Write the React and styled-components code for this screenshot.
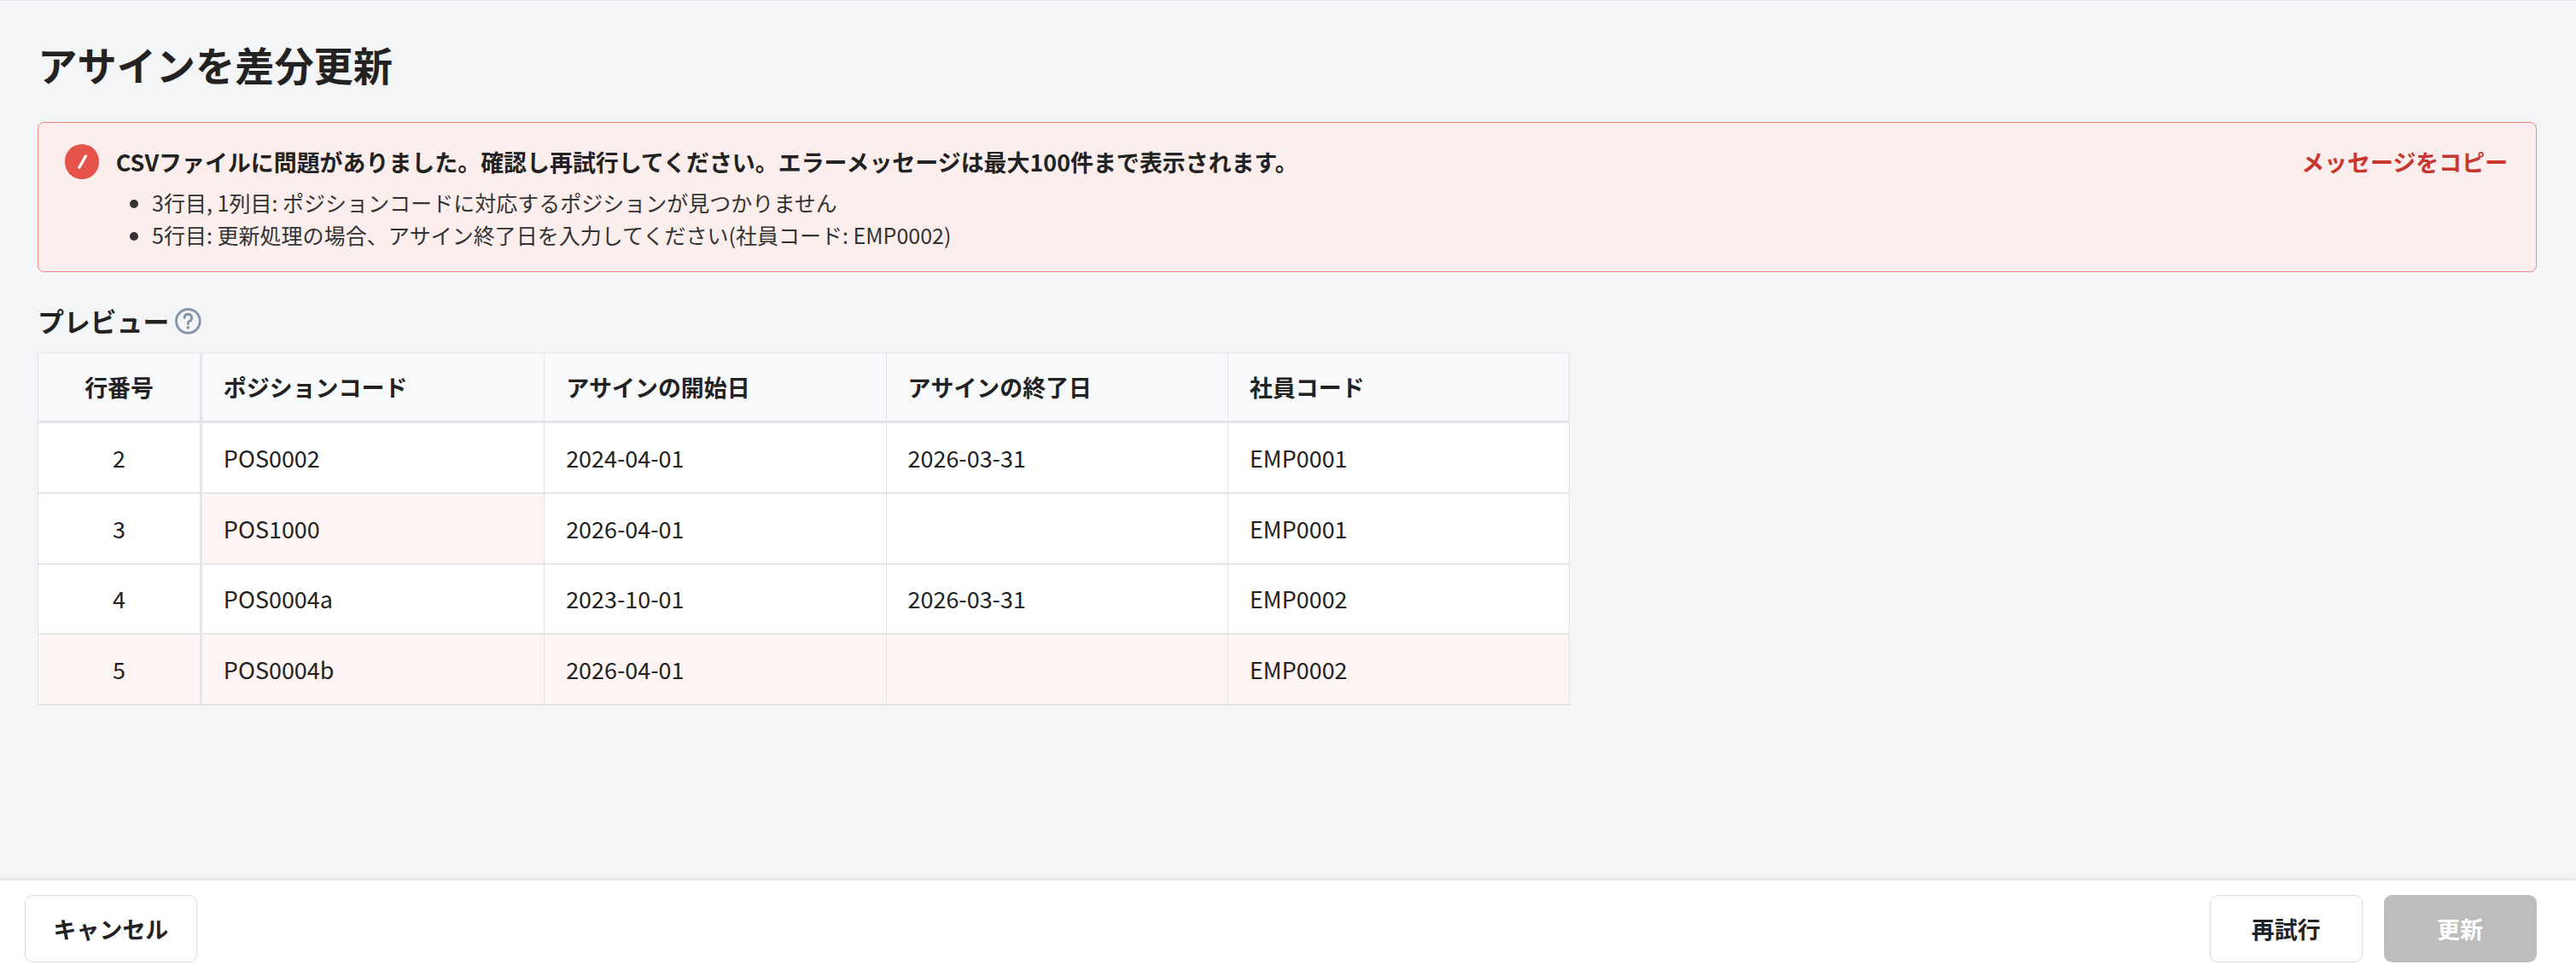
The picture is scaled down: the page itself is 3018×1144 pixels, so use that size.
import React from "react";
import styled, { createGlobalStyle } from "styled-components";

const S = 1.925;
const p = (v) => `${(v * S).toFixed(2)}px`;

const Global = createGlobalStyle`
  html, body { margin: 0; padding: 0; }
  body { background: #f4f5f7; font-family: "Noto Sans CJK JP", "Noto Sans", sans-serif; color: #222; }
`;

const Page = styled.div`
  height: 1144px;
  display: flex;
  flex-direction: column;
  border-top: ${p(1)} solid #ebecef;
  box-sizing: border-box;
`;
const Main = styled.main`
  flex: 1;
  padding: ${p(20)} ${p(24)} 0 ${p(23)};
`;
const Title = styled.h1`
  margin: 0;
  font-size: ${p(24)};
  font-weight: 700;
  line-height: ${p(36)};
`;
const Alert = styled.div`
  margin-top: ${p(18)};
  background: #fbeeed;
  border: ${p(1)} solid #ee8580;
  border-radius: ${p(4)};
  padding: ${p(13)} ${p(17)} ${p(12)} ${p(16)};
  display: flex;
  gap: ${p(10)};
`;
const AlertIcon = styled.div`
  width: ${p(21)};
  height: ${p(21)};
  border-radius: 50%;
  background: #e5534b;
  flex-shrink: 0;
  display: flex;
  align-items: center;
  justify-content: center;
`;
const AlertBody = styled.div` flex: 1; `;
const AlertTitle = styled.div`
  font-weight: 700;
  font-size: ${p(14)};
  line-height: ${p(22)};
`;
const List = styled.ul`
  margin: ${p(3)} 0 0;
  padding-left: ${p(22)};
  font-size: ${p(13)};
  line-height: ${p(20)};
  color: #333;
`;
const CopyLink = styled.button`
  border: none;
  background: none;
  padding: 0;
  align-self: flex-start;
  color: #c8372d;
  font: inherit;
  font-weight: 700;
  font-size: ${p(14)};
  line-height: ${p(22)};
  cursor: pointer;
`;
const SectionTitle = styled.div`
  margin-top: ${p(19)};
  display: flex;
  align-items: center;
  gap: ${p(3)};
  font-weight: 700;
  font-size: ${p(16)};
  line-height: ${p(22)};
`;
const Table = styled.table`
  margin-top: ${p(8)};
  border-collapse: collapse;
  background: #fff;
  border: ${p(1)} solid #e3e5e8;
  font-size: ${p(14)};
`;
const Th = styled.th`
  background: #f8f9fb;
  font-weight: 700;
  text-align: ${(x) => (x.$center ? "center" : "left")};
  width: ${(x) => p(x.$w)};
  height: ${p(42)};
  padding: 0 ${p(13)};
  border-right: ${(x) => (x.$first ? p(2) : p(1))} solid #e3e5e8;
  border-bottom: ${p(2)} solid #e3e5e8;
  box-sizing: border-box;
`;
const Td = styled.td`
  height: ${p(42)};
  padding: 0 ${p(13)};
  text-align: ${(x) => (x.$center ? "center" : "left")};
  background: ${(x) => (x.$err ? "#fdf4f3" : "transparent")};
  border-right: ${(x) => (x.$first ? p(2) : p(1))} solid #e3e5e8;
  border-bottom: ${p(1.5)} solid #e3e5e8;
  color: #222;
`;
const Tr = styled.tr` background: ${(x) => (x.$err ? "#fdf4f3" : "#fff")}; `;
const Footer = styled.footer`
  background: #fff;
  box-shadow: 0 -${p(1)} ${p(2)} rgba(0,0,0,0.08);
  height: ${p(58)};
  padding: 0 ${p(24)} 0 ${p(15)};
  display: flex;
  align-items: center;
  gap: ${p(13)};
`;
const Btn = styled.button`
  height: ${p(41)};
  padding: 0 ${p(17)};
  border-radius: ${p(5)};
  font: inherit;
  font-weight: 700;
  font-size: ${p(14)};
  border: ${(x) => (x.$disabled ? "none" : `${p(1)} solid #d8dde3`)};
  background: ${(x) => (x.$disabled ? "#bdbdbd" : "#fff")};
  color: ${(x) => (x.$disabled ? "#fff" : "#222")};
  min-width: ${(x) => (x.$w ? p(x.$w) : "auto")};
`;
const Spacer = styled.div` flex: 1; `;

const rows = [
  ["2", "POS0002", "2024-04-01", "2026-03-31", "EMP0001", false, false],
  ["3", "POS1000", "2026-04-01", "", "EMP0001", false, true],
  ["4", "POS0004a", "2023-10-01", "2026-03-31", "EMP0002", false, false],
  ["5", "POS0004b", "2026-04-01", "", "EMP0002", true, false],
];

export default function App() {
  return (
    <>
      <Global />
      <Page>
        <Main>
          <Title>アサインを差分更新</Title>
          <Alert>
            <AlertIcon>
              <svg width={p(10)} height={p(10)} viewBox="0 0 10 10">
                <line x1="3" y1="8.5" x2="7" y2="1.5" stroke="#fff" strokeWidth="1.6" strokeLinecap="round" />
              </svg>
            </AlertIcon>
            <AlertBody>
              <AlertTitle>CSVファイルに問題がありました。確認し再試行してください。エラーメッセージは最大100件まで表示されます。</AlertTitle>
              <List>
                <li>3行目, 1列目: ポジションコードに対応するポジションが見つかりません</li>
                <li>5行目: 更新処理の場合、アサイン終了日を入力してください(社員コード: EMP0002)</li>
              </List>
            </AlertBody>
            <CopyLink>メッセージをコピー</CopyLink>
          </Alert>
          <SectionTitle>
            プレビュー
            <svg width={p(17)} height={p(17)} viewBox="0 0 20 20">
              <circle cx="10" cy="10" r="8.5" fill="none" stroke="#8596ab" strokeWidth="1.8" />
              <path d="M7.4 7.6a2.6 2.6 0 1 1 3.6 2.4c-.7.3-1 .8-1 1.5v.6" fill="none" stroke="#8596ab" strokeWidth="1.8" strokeLinecap="round" />
              <circle cx="10" cy="14.6" r="1.1" fill="#8596ab" />
            </svg>
          </SectionTitle>
          <Table>
            <thead>
              <tr>
                <Th $w={99} $center $first>行番号</Th>
                <Th $w={209}>ポジションコード</Th>
                <Th $w={208}>アサインの開始日</Th>
                <Th $w={208}>アサインの終了日</Th>
                <Th $w={208}>社員コード</Th>
              </tr>
            </thead>
            <tbody>
              {rows.map((r) => (
                <Tr key={r[0]} $err={r[5]}>
                  <Td $center $first>{r[0]}</Td>
                  <Td $err={r[6]}>{r[1]}</Td>
                  <Td>{r[2]}</Td>
                  <Td>{r[3]}</Td>
                  <Td>{r[4]}</Td>
                </Tr>
              ))}
            </tbody>
          </Table>
        </Main>
        <Footer>
          <Btn>キャンセル</Btn>
          <Spacer />
          <Btn $w={93}>再試行</Btn>
          <Btn $w={93} $disabled>更新</Btn>
        </Footer>
      </Page>
    </>
  );
}
